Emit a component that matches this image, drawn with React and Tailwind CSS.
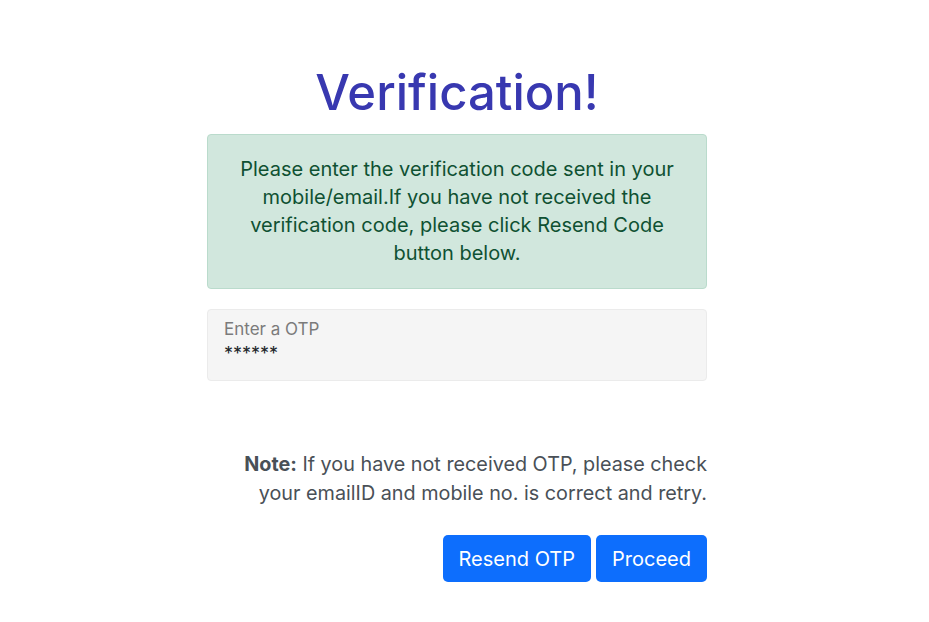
import React from 'react';

export default function App() {
    return (
        <div className="w-[914px] min-h-[622px] bg-white flex flex-col items-center font-['Inter',sans-serif]">
            <div className="w-[500px] flex flex-col pt-[62px]">
                {/* Title */}
                <h1 className="text-center text-[49px] leading-[62px] font-medium text-[#3838b0]">
                    Verification!
                </h1>

                {/* Alert */}
                <div className="mt-[10px] bg-[#d1e7dd] border border-[#badbcc] rounded-[4px] text-[#0f5132] text-center text-[20px] leading-[28px] px-8 pt-[20px] pb-[21px]">
                    Please enter the verification code sent in your mobile/email.If you have not received the verification code, please click Resend Code button below.
                </div>

                {/* OTP field */}
                <div className="mt-[20px] h-[72px] bg-[#f5f5f5] border border-[#ebebeb] rounded-[4px] px-4 pt-[8px]">
                    <div className="text-[17px] leading-[22px] text-[#7b7b7b]">Enter a OTP</div>
                    <div className="mt-[3px] text-[18px] leading-[22px] text-[#212529]">******</div>
                </div>

                {/* Note */}
                <p className="mt-[69px] text-right text-[19.8px] leading-[29px] text-[#495057]">
                    <span className="font-bold">Note:</span>{' '}If you have not received OTP, please check your emailID and mobile no. is correct and retry.
                </p>

                {/* Buttons */}
                <div className="mt-[27px] flex justify-end gap-[5px]">
                    <button className="h-[47px] px-4 bg-[#0d6efd] text-white text-[20px] rounded-[5px]">
                        Resend OTP
                    </button>
                    <button className="h-[47px] px-4 bg-[#0d6efd] text-white text-[20px] rounded-[5px]">
                        Proceed
                    </button>
                </div>
            </div>
        </div>
    );
}
